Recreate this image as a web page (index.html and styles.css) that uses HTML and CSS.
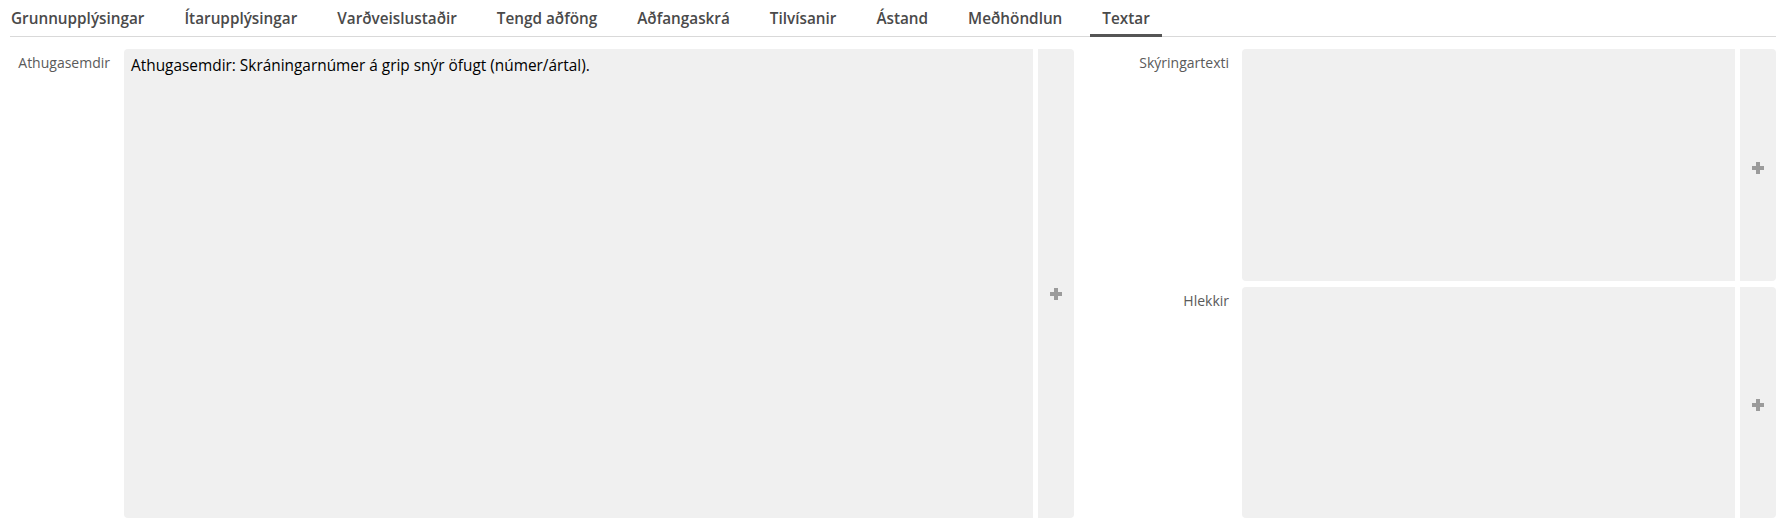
FILE: index.html
```html
<!DOCTYPE html>
<html lang="is">
<head>
<meta charset="utf-8">
<title>Textar</title>
<link rel="stylesheet" href="styles.css">
</head>
<body>
<div class="page">
  <nav class="tabs">
    <div class="tab-list">
      <a class="tab">Grunnupplýsingar</a>
      <a class="tab">Ítarupplýsingar</a>
      <a class="tab">Varðveislustaðir</a>
      <a class="tab">Tengd aðföng</a>
      <a class="tab">Aðfangaskrá</a>
      <a class="tab">Tilvísanir</a>
      <a class="tab">Ástand</a>
      <a class="tab">Meðhöndlun</a>
      <a class="tab active">Textar</a>
    </div>
  </nav>
  <div class="content">
    <div class="field field-left">
      <div class="field-label label-left">Athugasemdir</div>
      <div class="input-group">
        <div class="textbox">Athugasemdir: Skráningarnúmer á grip snýr öfugt (númer/ártal).</div>
        <button class="add-btn add-btn-tall" type="button">
          <svg class="plus" width="12" height="12" viewBox="0 0 12 12"><rect x="4" y="0" width="4" height="12" fill="#9b9b9b"/><rect x="0" y="4" width="12" height="4" fill="#9b9b9b"/></svg>
        </button>
      </div>
    </div>
    <div class="right-col">
      <div class="field">
        <div class="field-label label-right">Skýringartexti</div>
        <div class="input-group">
          <div class="textbox"></div>
          <button class="add-btn add-btn-short" type="button">
            <svg class="plus" width="12" height="12" viewBox="0 0 12 12"><rect x="4" y="0" width="4" height="12" fill="#9b9b9b"/><rect x="0" y="4" width="12" height="4" fill="#9b9b9b"/></svg>
          </button>
        </div>
      </div>
      <div class="field">
        <div class="field-label label-right">Hlekkir</div>
        <div class="input-group">
          <div class="textbox"></div>
          <button class="add-btn add-btn-short" type="button">
            <svg class="plus" width="12" height="12" viewBox="0 0 12 12"><rect x="4" y="0" width="4" height="12" fill="#9b9b9b"/><rect x="0" y="4" width="12" height="4" fill="#9b9b9b"/></svg>
          </button>
        </div>
      </div>
    </div>
  </div>
</div>
</body>
</html>
```

FILE: styles.css
```css
* { box-sizing: border-box; }

html, body {
  margin: 0;
  padding: 0;
  background: #ffffff;
  font-family: "Open Sans", "Noto Sans", sans-serif;
}

.page {
  padding: 0 16px 0 10px;
}

.tabs {
  height: 37px;
  border-bottom: 1px solid #d9d9d9;
}

.tab-list {
  display: flex;
  gap: 16px;
  margin-left: -11px;
  height: 36px;
}

.tab {
  display: block;
  padding: 0 12px;
  height: 36px;
  line-height: 36px;
  font-size: 15.3px;
  font-weight: 600;
  color: #4a4a4a;
  white-space: nowrap;
  cursor: pointer;
}

.tab.active {
  border-bottom: 3px solid #555555;
  height: 37px;
}

.content {
  display: grid;
  grid-template-columns: 1064px 1fr;
  margin-top: 12px;
  height: 469px;
}

.field {
  display: flex;
  min-height: 0;
}

.field-label {
  font-size: 14px;
  line-height: 20px;
  color: #5a5a5a;
  padding-top: 4px;
  padding-right: 14px;
  text-align: right;
  flex: none;
}

.label-left {
  width: 114px;
}

.label-right {
  width: 168px;
  padding-right: 13px;
}

.input-group {
  flex: 1;
  display: flex;
  gap: 5px;
  min-width: 0;
}

.textbox {
  flex: 1;
  background: #f0f0f0;
  border-radius: 4px 0 0 4px;
  padding: 6px 7px;
  font-size: 15.4px;
  line-height: 21px;
  color: #000000;
}

.add-btn {
  flex: none;
  width: 36px;
  border: none;
  margin: 0;
  background: #f0f0f0;
  border-radius: 0 4px 4px 0;
  display: flex;
  align-items: center;
  justify-content: center;
  padding: 0;
  cursor: pointer;
}

.add-btn-tall {
  padding-top: 20px;
}

.add-btn-short {
  padding-top: 6px;
}

.plus {
  display: block;
}

.right-col {
  display: grid;
  grid-template-rows: 1fr 1fr;
  row-gap: 6px;
  min-height: 0;
}
```
